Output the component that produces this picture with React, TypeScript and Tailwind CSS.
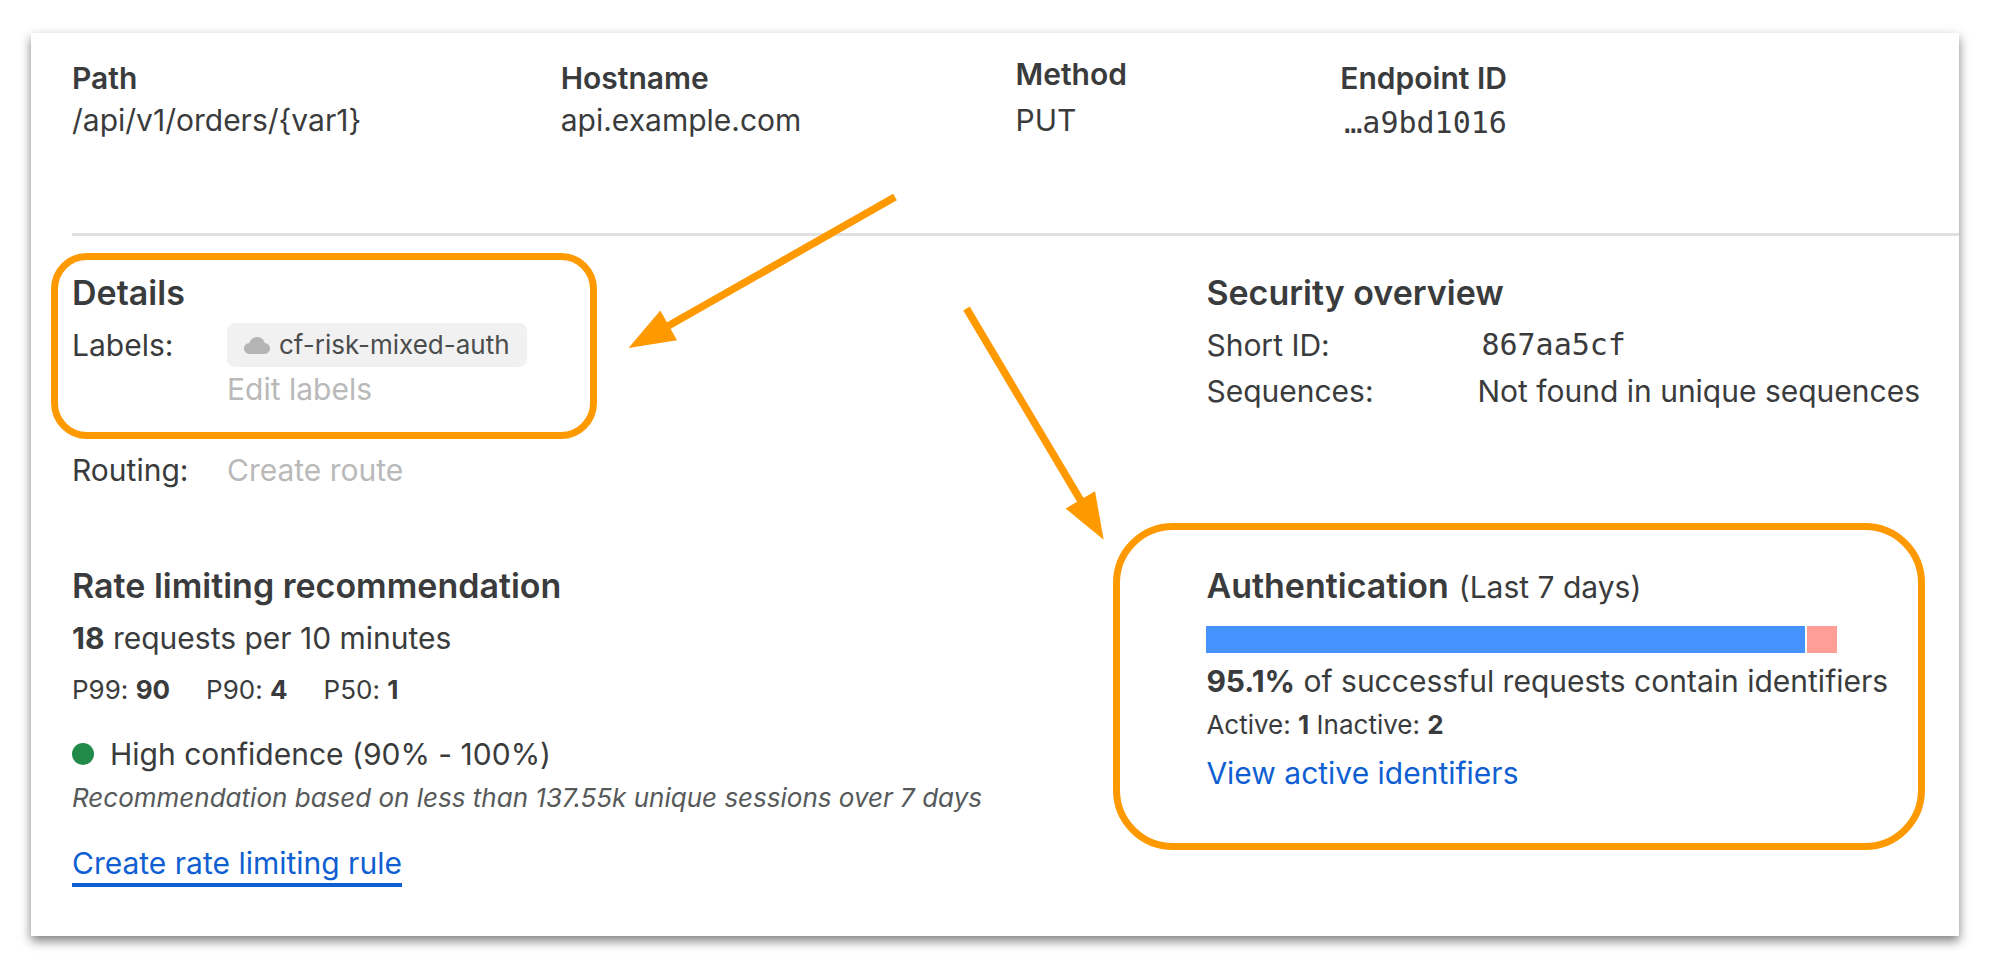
import type { ReactNode } from "react";

type FieldProps = { label: string; children: ReactNode };

function Field({ label, children }: FieldProps) {
  return (
    <div className="pt-1">
      <dt className="font-semibold">{label}</dt>
      <dd>{children}</dd>
    </div>
  );
}

function SectionTitle({ children }: { children: ReactNode }) {
  return <h2 className="text-[34px] leading-[44px] font-semibold">{children}</h2>;
}

function CloudIcon() {
  return (
    <svg viewBox="0 0 26 17" className="h-[17px] w-[26px] shrink-0" fill="#b5b5b5" aria-hidden="true">
      <path d="M5.600 17C2.500 17 0 14.600 0 11.500 0 8.400 2.300 6 5.300 5.900 6.400 2.500 9.500 0 13.100 0c3.700 0 6.800 2.500 7.700 5.900C23.700 6.100 26 8.500 26 11.500 26 14.600 23.500 17 20.400 17Z" />
    </svg>
  );
}

function Arrows() {
  return (
    <svg
      className="pointer-events-none absolute top-0 left-0 h-[560px] w-[1120px]"
      viewBox="31 33 1120 560"
      fill="#ff9900"
      stroke="#ff9900"
      aria-hidden="true"
    >
      <path d="M895 197 668 326" strokeWidth="7.500" />
      <path d="M628.500 348 660.300 310.500 677 340.200Z" stroke="none" />
      <path d="M966.500 308.500 1081 501" strokeWidth="7.500" />
      <path d="M1103.700 539.700 1095 491.300 1065.600 508.600Z" stroke="none" />
    </svg>
  );
}

export default function App() {
  return (
    <div className="bg-white pt-[33px] pr-10 pb-[43px] pl-[31px] font-['Inter',sans-serif] text-[30px] leading-[44px] text-[#3a3b3c] [font-variant-ligatures:no-contextual]">
      <main className="relative bg-white pt-5 pb-[49px] pl-[41px] shadow-[0_5px_10px_rgba(0,0,0,0.5)]">
        <dl className="grid grid-cols-[489fr_455fr_325fr_619fr] border-b-3 border-[#e0e0e0] pb-[86px] leading-[42px]">
          <Field label="Path">/api/v1/orders/{"{var1}"}</Field>
          <Field label="Hostname">api.example.com</Field>
          <div className="flex flex-col gap-1">
            <dt className="font-semibold">Method</dt>
            <dd>PUT</dd>
          </div>
          <Field label="Endpoint ID">
            <span className="block pl-1 font-['DejaVu_Sans_Mono',monospace] leading-[48px]">…a9bd1016</span>
          </Field>
        </dl>

        <div className="grid grid-cols-[1135fr_753fr] gap-y-[72px] pt-[35px]">
          <section>
            <div className="relative">
              <SectionTitle>Details</SectionTitle>
              <div className="mt-2 flex">
                <span className="w-[155px]">Labels:</span>
                <div className="flex flex-col items-start">
                  <span className="flex items-center gap-[9px] rounded-lg bg-[#f1f1f1] px-[17px] text-[26px] text-[#4a4c4d]">
                    <CloudIcon />
                    cf-risk-mixed-auth
                  </span>
                  <button type="button" className="text-[#b9b9b9]">
                    Edit labels
                  </button>
                </div>
              </div>
              <div className="pointer-events-none absolute -top-[18px] -left-[21px] h-[186px] w-[546px] rounded-[36px] border-7 border-[#ff9900]" />
            </div>
            <div className="mt-[37px] flex">
              <span className="w-[155px]">Routing:</span>
              <button type="button" className="text-[#b9b9b9]">
                Create route
              </button>
            </div>
          </section>

          <section>
            <SectionTitle>Security overview</SectionTitle>
            <dl className="mt-2 grid grid-cols-[271px_1fr] gap-y-0.5">
              <dt>Short ID:</dt>
              <dd className="pl-1 font-['DejaVu_Sans_Mono',monospace]">867aa5cf</dd>
              <dt>Sequences:</dt>
              <dd>Not found in unique sequences</dd>
            </dl>
          </section>

          <section>
            <SectionTitle>Rate limiting recommendation</SectionTitle>
            <p className="mt-2">
              <b className="font-bold">18</b> requests per 10 minutes
            </p>
            <p className="mt-2 flex gap-9 text-[26px]">
              <span>
                P99: <b className="font-bold">90</b>
              </span>
              <span>
                P90: <b className="font-bold">4</b>
              </span>
              <span>
                P50: <b className="font-bold">1</b>
              </span>
            </p>
            <p className="mt-5 flex items-center gap-4">
              <span className="size-[22px] rounded-full bg-[#228b49]" />
              High confidence (90% - 100%)
            </p>
            <p className="text-[26px] text-[#56595a] italic">
              Recommendation based on less than 137.55k unique sessions over 7 days
            </p>
            <div className="mt-[23px] flex">
              <a href="#create-rule" className="border-b-4 border-[#0f5fd2] leading-[40px] text-[#0f5fd2]">
                Create rate limiting rule
              </a>
            </div>
          </section>

          <section className="relative">
            <div className="flex items-baseline gap-2.5">
              <SectionTitle>Authentication</SectionTitle>
              <span>(Last 7 days)</span>
            </div>
            <div className="mt-[17px] flex h-[27px] w-[631px] gap-0.5">
              <div className="grow bg-[#4693ff]" />
              <div className="w-[30px] bg-[#ff9e97]" />
            </div>
            <p className="mt-1.5">
              <b className="font-bold">95.1%</b> of successful requests contain identifiers
            </p>
            <p className="text-[26px]">
              Active: <b className="font-bold">1</b> Inactive: <b className="font-bold">2</b>
            </p>
            <div className="mt-1 flex">
              <a href="#identifiers" className="text-[#0f5fd2]">
                View active identifiers
              </a>
            </div>
            <div className="pointer-events-none absolute -top-[41px] -left-[93px] h-[327px] w-[812px] rounded-[60px] border-7 border-[#ff9900]" />
          </section>
        </div>

        <Arrows />
      </main>
    </div>
  );
}
